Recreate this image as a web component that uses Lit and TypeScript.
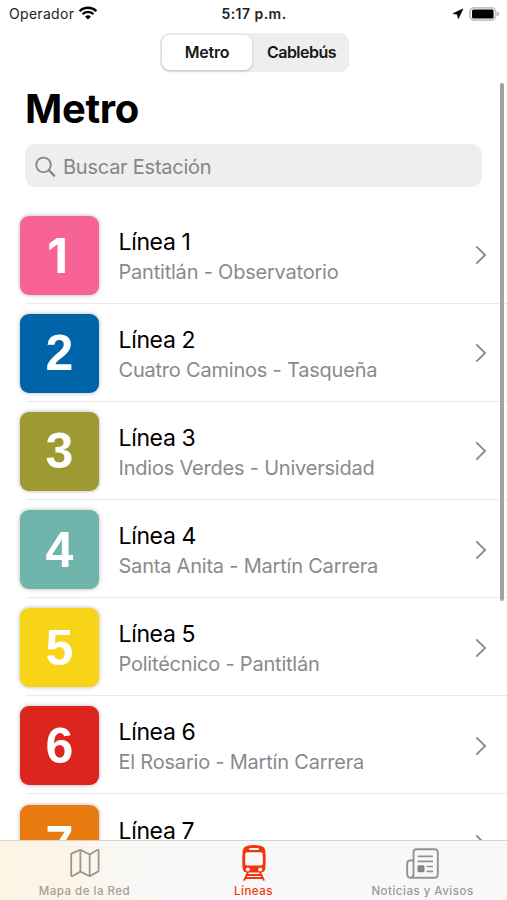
import { LitElement, html, css, svg } from "lit";
import { customElement } from "lit/decorators.js";
import { classMap } from "lit/directives/class-map.js";

interface MetroLine {
  id: number;
  color: string;
  route: string;
}

const LINES: MetroLine[] = [
  { id: 1, color: "#f76395", route: "Pantitlán - Observatorio" },
  { id: 2, color: "#0064a9", route: "Cuatro Caminos - Tasqueña" },
  { id: 3, color: "#9e9a33", route: "Indios Verdes - Universidad" },
  { id: 4, color: "#70b5ac", route: "Santa Anita - Martín Carrera" },
  { id: 5, color: "#f7d417", route: "Politécnico - Pantitlán" },
  { id: 6, color: "#db251d", route: "El Rosario - Martín Carrera" },
  { id: 7, color: "#e87b10", route: "El Rosario - Barranca del Muerto" },
];

const wifiIcon = svg`<svg class="wifi" viewBox="0 0 20 16" width="20" height="16" fill="none" stroke="#000" stroke-width="2.3">
  <path d="M1.6 6.2a12 12 0 0 1 16.8 0"/><path d="M4.5 9.2a7.9 7.9 0 0 1 11 0"/>
  <path d="M10 14.6 7.1 11.8a4.1 4.1 0 0 1 5.8 0z" fill="#000" stroke="none"/></svg>`;

const locationIcon = svg`<svg viewBox="0 0 12 12" width="12" height="12"><path d="M10.800 1 6.300 10.500 5.500 6.300 1.200 5.600z" fill="#000" stroke="#000" stroke-width=".8" stroke-linejoin="round"/></svg>`;

const batteryIcon = svg`<svg class="battery" viewBox="0 0 31 14" width="31" height="14">
  <rect x=".9" y=".9" width="25.600" height="12.200" rx="3.800" fill="#fff" stroke="#c4c4c4" stroke-width="1.8"/>
  <rect x="3" y="2.600" width="21.600" height="8.800" rx="1.500" fill="#000"/>
  <path d="M27.600 4.600q2.800 1 2.800 2.400t-2.800 2.400z" fill="#bcbcbc"/></svg>`;

const searchIcon = svg`<svg viewBox="0 0 22 22" width="22" height="22" fill="none" stroke="#858587" stroke-linecap="round">
  <circle cx="8.500" cy="8.900" r="7.300" stroke-width="1.8"/><path d="m13.900 14.300 5.300 5.300" stroke-width="2.200"/></svg>`;

const chevronIcon = svg`<svg class="chevron" viewBox="0 0 12 20" width="12" height="20" fill="none" stroke="#88888a" stroke-width="1.8"><path d="m1.3 1.3 8.8 8.7-8.8 8.7"/></svg>`;

const mapIcon = svg`<svg viewBox="0 0 30 28" width="30" height="28" fill="none" stroke="#9c968b" stroke-width="1.8" stroke-linejoin="round">
  <path d="M1.2 5.5q0-.8.7-1.2L10.4.9l9.3 4.6L27.2 1q1.4-.5 1.4.9v19.5q0 .8-.7 1.2l-8.2 4.6-9.3-4.6-7.8 4.4q-1.4.5-1.400-.9z"/>
  <path d="M10.4 1v21.5M19.7 5.5V27"/></svg>`;

const trainIcon = svg`<svg viewBox="0 0 26 36" width="26" height="36">
  <path fill="#f4340c" fill-rule="evenodd" d="M6.500.8Q13-.7 19.500.8q4.300 1 4.800 5.200.8 8.500.1 17-.4 4.500-4.800 4.500H6.400q-4.400 0-4.800-4.500-.7-8.500.1-17Q2.200 1.800 6.500.8zM9 3a.9.9 0 0 0 0 2h8a.9.9 0 0 0 0-2zM6.300 7.300q-1.900 0-2 1.700l-.2 9.400q0 2 2 2h13.800q2 0 2-2l-.2-9.400q-.1-1.700-2-1.700zM6.800 22.500a2 2 0 1 0 0 4 2 2 0 0 0 0-4zM19.200 22.500a2 2 0 1 0 0 4 2 2 0 0 0 0-4z"/>
  <path d="M6.800 27.500 3.300 34.800M19.200 27.500l3.500 7.300M6.200 30h13.600M4.500 33h17" stroke="#f4340c" stroke-width="1.900" stroke-linecap="round" fill="none"/></svg>`;

const newsIcon = svg`<svg viewBox="0 0 33 31" width="33" height="31" fill="none" stroke="#929292" stroke-width="1.900" stroke-linecap="round">
  <path d="M7.500 12.500H4.200q-3 0-3 3v10.700q0 3.500 3.500 3.500h23.600q3.500 0 3.500-3.500V4.300q0-3-3-3H10.500q-3 0-3 3v22q0 3.400-3 3.400"/>
  <path d="M12.300 8.300h14M12.300 13.400h14M21.300 18.500h5M21.300 23.300h5" stroke-width="1.700"/>
  <rect x="11.500" y="17.300" width="7" height="7" rx="1.200" fill="#858585" stroke="none"/></svg>`;

@customElement("app-root")
export class AppRoot extends LitElement {
  static styles = css`
    :host {
      display: flex;
      flex-direction: column;
      position: relative;
      width: 507px;
      height: 900px;
      overflow: hidden;
      background: #fff;
      color: #000;
      font-family: Inter, "Liberation Sans", sans-serif;
    }
    * { box-sizing: border-box; }
    svg { display: block; flex: none; }
    .status {
      display: grid;
      grid-template-columns: 1fr auto 1fr;
      align-items: center;
      height: 28px;
      padding: 0 7px 0 9px;
      font-size: 14px;
      line-height: 28px;
      color: #222;
    }
    .carrier, .indicators { display: flex; align-items: center; }
    .carrier { gap: 4px; letter-spacing: 0.300px; }
    .wifi { margin-top: -3px; }
    .clock { margin-right: 1px; font-weight: 600; letter-spacing: 0.450px; }
    .indicators { justify-content: flex-end; gap: 5px; }
    .battery { margin-top: -1px; }
    .segmented {
      display: flex;
      flex: none;
      width: 189px;
      height: 39px;
      margin: 5px 0 0 160px;
      padding: 2px;
      border-radius: 9px;
      background: #eeeeef;
      font-size: 16px;
      line-height: 35px;
      font-weight: 600;
      letter-spacing: -0.250px;
      text-align: center;
      color: #161616;
    }
    .segment { flex: 1; }
    .segment.active {
      flex: none;
      width: 90px;
      border-radius: 8px;
      background: #fff;
      box-shadow: 0 1px 3px rgba(0, 0, 0, 0.22);
    }
    .segment:not(.active) { padding-left: 4px; letter-spacing: -0.500px; }
    h1 {
      margin: 12px 0 0 25px;
      font-size: 40px;
      line-height: 50px;
      font-weight: 700;
      letter-spacing: -0.300px;
    }
    .search {
      display: flex;
      align-items: center;
      gap: 6px;
      width: 457px;
      height: 43px;
      flex: none;
      margin: 10px 0 0 25px;
      padding: 2px 10px 0;
      border-radius: 11px;
      background: #eee;
      color: #858587;
      font-size: 20px;
      letter-spacing: -0.240px;
    }
    .list { flex: none; padding-top: 18.600px; }
    .row {
      display: flex;
      align-items: center;
      position: relative;
      height: 98.150px;
      padding: 1px 20px 0;
    }
    .row::after {
      content: "";
      position: absolute;
      left: 26px;
      right: 0;
      bottom: 0;
      height: 1px;
      background: #e9e9ea;
    }
    .tile {
      display: flex;
      align-items: center;
      justify-content: center;
      width: 79px;
      height: 79px;
      border-radius: 9px;
      box-shadow: 0 0 4px rgba(0, 0, 0, 0.3);
      color: #fff;
      font: bold 50px "Liberation Sans", sans-serif;
    }
    .tile.plain-one { padding-right: 4px; font: bold 48px Inter, "Liberation Sans", sans-serif; }
    .info { flex: 1; padding: 4px 0 0 19.500px; white-space: nowrap; }
    .name { font-size: 23px; line-height: 29px; letter-spacing: -0.350px; }
    .route { font-size: 20px; line-height: 30px; letter-spacing: -0.210px; color: #8a8a8d; }
    .scroll {
      position: absolute;
      top: 83px;
      right: 3px;
      width: 4px;
      height: 518px;
      border-radius: 2px;
      background: #a3a3a3;
    }
    .tabs {
      position: absolute;
      inset: auto 0 0 0;
      display: grid;
      grid-template-columns: repeat(3, 1fr);
      height: 60px;
      border-top: 1px solid #d4d3d0;
      background: linear-gradient(90deg, #fdf4e4 0, #fcf4e6 60px, #f9f7f3 115px, #f8f8f8 170px);
      font-size: 11.500px;
      font-weight: 500;
      color: #999;
    }
    .tab { display: flex; flex-direction: column; align-items: center; }
    .glyph { height: 41px; padding-top: 3px; display: flex; align-items: center; }
    .label { line-height: 18px; white-space: nowrap; letter-spacing: 0.500px; }
    .map { color: #a39e94; }
    .current { color: #f4340c; }
  `;

  render() {
    return html`
      <div class="status">
        <div class="carrier"><span>Operador</span>${wifiIcon}</div>
        <div class="clock">5:17 p.m.</div>
        <div class="indicators">${locationIcon}${batteryIcon}</div>
      </div>
      <div class="segmented">
        <div class="segment active">Metro</div>
        <div class="segment">Cablebús</div>
      </div>
      <h1>Metro</h1>
      <div class="search">${searchIcon}<span>Buscar Estación</span></div>
      <div class="list">
        ${LINES.map(
          (line) => html`<div class="row">
            <div
              class=${classMap({ tile: true, "plain-one": line.id === 1 })}
              style="background:${line.color}"
            >${line.id}</div>
            <div class="info">
              <div class="name">Línea ${line.id}</div>
              <div class="route">${line.route}</div>
            </div>
            ${chevronIcon}
          </div>`
        )}
      </div>
      <div class="scroll"></div>
      <nav class="tabs">
        <div class="tab map"><div class="glyph">${mapIcon}</div><div class="label">Mapa de la Red</div></div>
        <div class="tab current"><div class="glyph">${trainIcon}</div><div class="label">Líneas</div></div>
        <div class="tab"><div class="glyph">${newsIcon}</div><div class="label">Noticias y Avisos</div></div>
      </nav>
    `;
  }
}
